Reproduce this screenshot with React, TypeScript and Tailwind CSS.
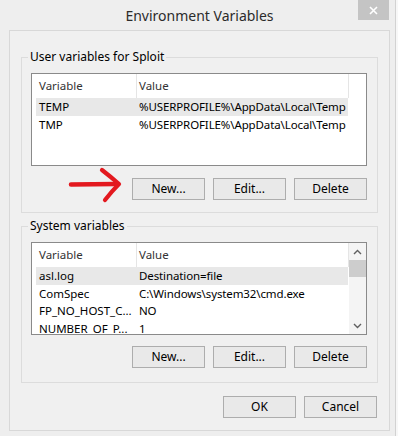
import type { ReactNode } from 'react';

const font = "font-['Segoe_UI','Noto_Sans','Open_Sans',sans-serif]";

function WinButton({ children }: { children: ReactNode }) {
  return (
    <button className="flex h-[22px] w-[73px] shrink-0 items-center justify-center border border-[#adadad] bg-[#e9e9e9] text-[12px] leading-[18px] text-black">
      {children}
    </button>
  );
}

function Chevron({ down }: { down?: boolean }) {
  return (
    <svg width="9" height="6" viewBox="0 0 9 6" className="text-[#606060]">
      <path
        d={down ? 'M1 1 L4.5 4.5 L8 1' : 'M1 5 L4.5 1.5 L8 5'}
        fill="none"
        stroke="currentColor"
        strokeWidth="1.4"
      />
    </svg>
  );
}

function ListHeader({ filler }: { filler: boolean }) {
  return (
    <div className="flex h-[24px] shrink-0 items-center bg-white text-[11.5px] text-[#333]">
      <div className="flex h-full w-[105px] shrink-0 items-center border-r border-[#e5e5e5] pl-[7px]">Variable</div>
      <div className="flex h-full w-[212px] shrink-0 items-center border-r border-[#e5e5e5] pl-[2px]">Value</div>
      {filler && <div className="h-full flex-1" />}
    </div>
  );
}

function Row({ name, value, selected }: { name: string; value: string; selected?: boolean }) {
  return (
    <div
      className={`ml-[4px] flex h-[17.5px] w-[312px] shrink-0 items-center overflow-hidden whitespace-nowrap text-[11.5px] text-black ${
        selected ? 'bg-[#e8e8e8]' : ''
      }`}
    >
      <div className="w-[101px] shrink-0 overflow-hidden pl-[3px]">{name}</div>
      <div className="shrink-0 pl-[2px] tracking-[-0.01em]">{value}</div>
    </div>
  );
}

function ArrowMark() {
  // hand-drawn red arrow pointing at "New..."
  return (
    <svg width="53" height="22" viewBox="0 0 53 22" className="mr-[2px] shrink-0 overflow-visible">
      <path d="M2 6.5 L47 6" stroke="#e3191f" strokeWidth="4.5" strokeLinecap="round" fill="none" />
      <path
        d="M33 -8 Q42 -1 50 6 Q43 13 36 22"
        stroke="#e3191f"
        strokeWidth="4.2"
        strokeLinecap="round"
        strokeLinejoin="round"
        fill="none"
      />
    </svg>
  );
}

export default function App() {
  const userVars = [
    { name: 'TEMP', value: '%USERPROFILE%\\AppData\\Local\\Temp', selected: true },
    { name: 'TMP', value: '%USERPROFILE%\\AppData\\Local\\Temp' },
  ];
  const systemVars = [
    { name: 'asl.log', value: 'Destination=file', selected: true },
    { name: 'ComSpec', value: 'C:\\Windows\\system32\\cmd.exe' },
    { name: 'FP_NO_HOST_C...', value: 'NO' },
    { name: 'NUMBER_OF_P...', value: '1' },
  ];

  return (
    <div className={`h-[436px] w-[398px] overflow-hidden bg-[#f7f7f7] ${font}`}>
      <div className="relative flex h-[436px] w-[396px] flex-col border-r border-[#d2d2d2] bg-[#eeeeee]">
        <div className="flex h-[30px] shrink-0 items-center justify-center pl-[4px] text-[14px] text-[#2b2b2b]">
          Environment Variables
        </div>
        <div className="absolute right-[6px] top-0 flex h-[20px] w-[31px] items-center justify-center bg-[#c4c4c4]">
          <svg width="9" height="9" viewBox="0 0 9 9">
            <path d="M1 1 L8 8 M8 1 L1 8" stroke="white" strokeWidth="1.6" />
          </svg>
        </div>

        <div className="ml-[9px] flex w-[381px] flex-col border border-[#d8d8d8] bg-[#f0f0f0] px-[11px] pb-[12px] pt-[18px]">
          <fieldset className="border border-[#dcdcdc] pb-[12px] pl-[9px] pr-[10px] pt-[8px]">
            <legend className="ml-[-3px] px-[2px] text-[12px] leading-[16px] text-black">User variables for Sploit</legend>
            <div className="flex h-[93px] flex-col overflow-hidden border border-[#8a8a8a] bg-white">
              <ListHeader filler />
              {userVars.map((v) => (
                <Row key={v.name} {...v} />
              ))}
            </div>
            <div className="mt-[12px] flex items-center justify-end gap-[8px]">
              <ArrowMark />
              <WinButton>New...</WinButton>
              <WinButton>Edit...</WinButton>
              <WinButton>Delete</WinButton>
            </div>
          </fieldset>

          <fieldset className="mt-[5px] border border-[#dcdcdc] pb-[14px] pl-[9px] pr-[10px] pt-[8px]">
            <legend className="ml-[-3px] px-[2px] text-[12px] leading-[16px] text-black">System variables</legend>
            <div className="flex h-[93px] overflow-hidden border border-[#8a8a8a] bg-white">
              <div className="flex min-w-0 flex-1 flex-col">
                <ListHeader filler={false} />
                {systemVars.map((v) => (
                  <Row key={v.name} {...v} />
                ))}
              </div>
              <div className="flex w-[17px] shrink-0 flex-col bg-[#f4f4f4]">
                <div className="flex h-[17px] items-center justify-center">
                  <Chevron />
                </div>
                <div className="h-[17px] bg-[#cdcdcd]" />
                <div className="flex-1" />
                <div className="flex h-[17px] items-center justify-center">
                  <Chevron down />
                </div>
              </div>
            </div>
            <div className="mt-[11px] flex items-center justify-end gap-[8px]">
              <WinButton>New...</WinButton>
              <WinButton>Edit...</WinButton>
              <WinButton>Delete</WinButton>
            </div>
          </fieldset>

          <div className="mt-[13px] flex justify-end gap-[8px] pr-[1px]">
            <WinButton>OK</WinButton>
            <WinButton>Cancel</WinButton>
          </div>
        </div>
      </div>
    </div>
  );
}
